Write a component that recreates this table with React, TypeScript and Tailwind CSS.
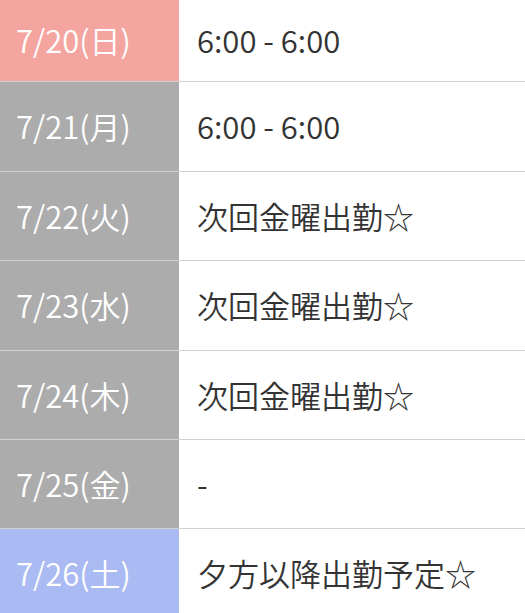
const rows = [
  { date: "7/20(日)", text: "6:00 - 6:00", tone: "bg-[#f5a5a0]", h: "h-[82px]" },
  { date: "7/21(月)", text: "6:00 - 6:00", tone: "bg-[#acacac]", h: "h-[90px]" },
  { date: "7/22(火)", text: "次回金曜出勤☆", tone: "bg-[#acacac]", h: "h-[89px]" },
  { date: "7/23(水)", text: "次回金曜出勤☆", tone: "bg-[#acacac]", h: "h-[90px]" },
  { date: "7/24(木)", text: "次回金曜出勤☆", tone: "bg-[#acacac]", h: "h-[89px]" },
  { date: "7/25(金)", text: "-", tone: "bg-[#acacac]", h: "h-[89px]" },
  { date: "7/26(土)", text: "夕方以降出勤予定☆", tone: "bg-[#aabaf2]", h: "h-[89px]" },
];

export default function App() {
  return (
    <div
      className="w-[525px] h-[613px] overflow-hidden bg-white"
      style={{ fontFamily: '"Noto Sans CJK JP", "Noto Sans", sans-serif' }}
    >
      {rows.map((r, i) => (
        <div
          key={i}
          className={`flex ${r.h} ${i < rows.length - 1 ? "border-b border-[#d2d2d2]" : ""}`}
        >
          <div className={`w-[179px] shrink-0 flex items-center pl-4 text-white text-[31px] font-[350] ${r.tone}`}>
            {r.date}
          </div>
          <div className="flex-1 flex items-center pl-[18px] text-[#333] text-[31px] font-[350]">
            {r.text}
          </div>
        </div>
      ))}
    </div>
  );
}
